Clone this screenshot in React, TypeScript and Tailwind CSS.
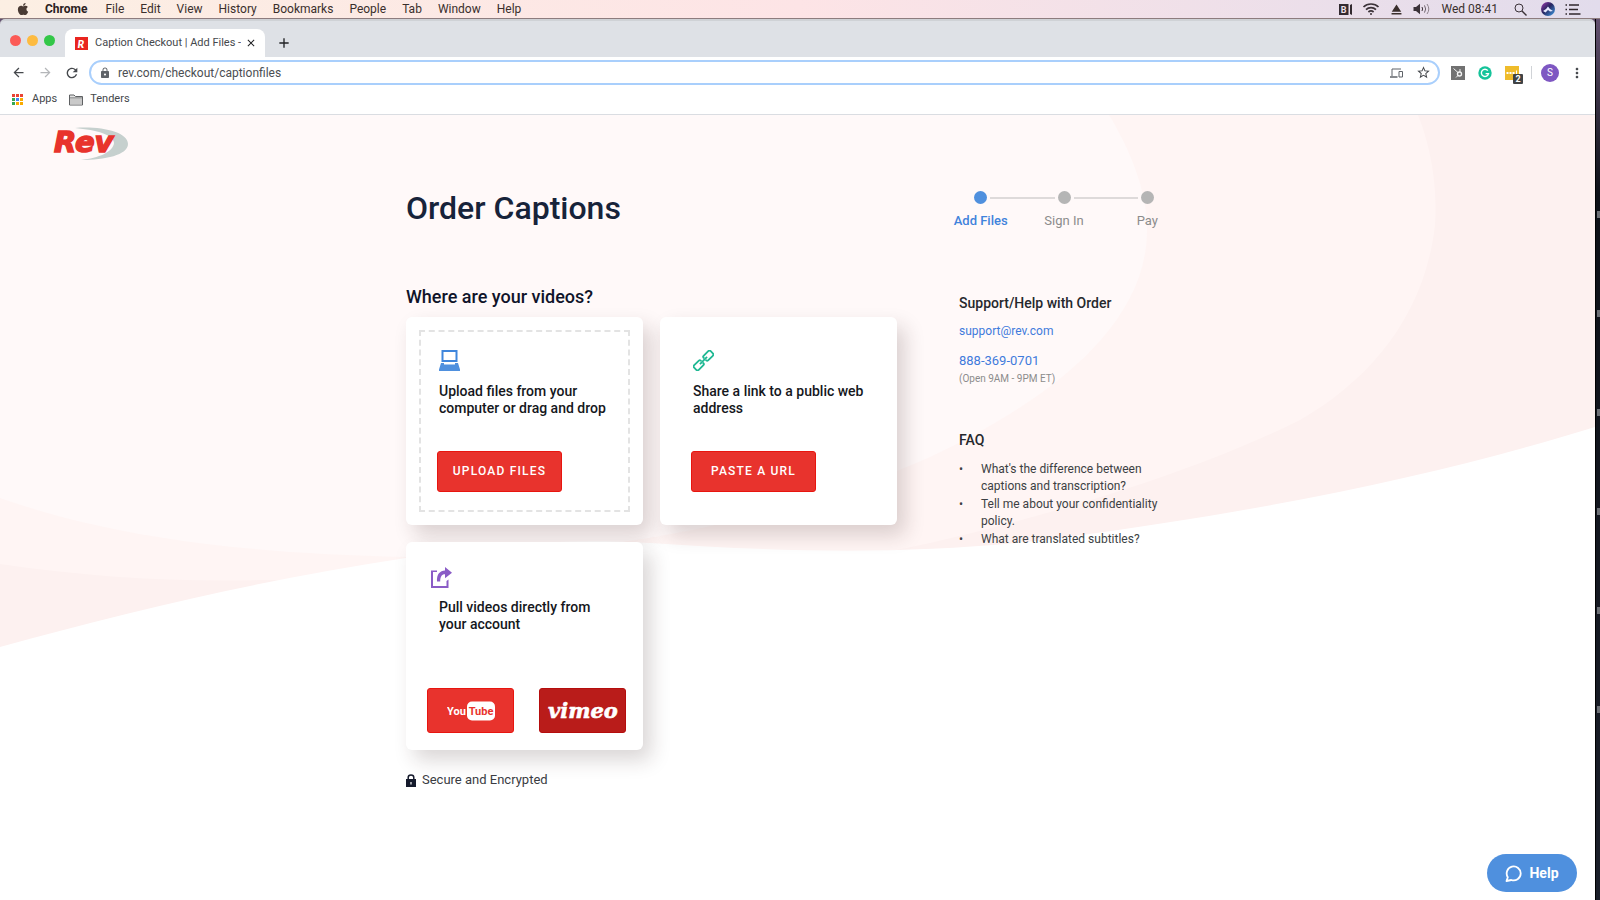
import React from "react";
import clsx from "clsx";
import { FaApple } from "react-icons/fa";
import {
  MdArrowBack,
  MdArrowForward,
  MdRefresh,
  MdLock,
  MdStarBorder,
  MdMoreVert,
  MdEject,
  MdClose,
  MdAdd,
} from "react-icons/md";

const menuItems = ["File", "Edit", "View", "History", "Bookmarks", "People", "Tab", "Window", "Help"];

const steps = [
  { label: "Add Files", active: true },
  { label: "Sign In", active: false },
  { label: "Pay", active: false },
];

const faqs = [
  "What's the difference between captions and transcription?",
  "Tell me about your confidentiality policy.",
  "What are translated subtitles?",
];

const appDots = [
  "#e94335", "#e94335", "#e94335",
  "#34a853", "#4285f4", "#f9ab00",
  "#34a853", "#f9ab00", "#f9ab00",
];

const WifiIcon = () => (
  <svg width="18" height="14" viewBox="0 0 18 14" fill="none" stroke="#3b3238" strokeWidth="1.7">
    <path d="M1.5 5 C5.5 1 12.5 1 16.5 5" />
    <path d="M4 7.6 C6.8 5 11.2 5 14 7.6" />
    <path d="M6.4 10 C8 8.6 10 8.6 11.6 10" />
    <circle cx="9" cy="12" r="1" fill="#3b3238" stroke="none" />
  </svg>
);

const VolumeIcon = () => (
  <svg width="18" height="12" viewBox="0 0 18 12" fill="none" stroke="#3b3238">
    <path d="M0.5 4 H3 L7 0.8 V11.2 L3 8 H0.5 Z" fill="#3b3238" stroke="none" />
    <path d="M9 4 Q10.2 6 9 8" />
    <path d="M11.5 2.4 Q13.8 6 11.5 9.6" stroke="#6d636b" />
    <path d="M14 1 Q17.6 6 14 11" stroke="#8d838b" />
  </svg>
);

const MenuBar = () => (
  <div className="flex h-[18px] items-center bg-linear-to-r from-[#fcefe3] via-[#fde4e6] to-[#e2dcec] pr-[19px] pl-4 text-[12px] leading-[18px] text-[#3a2f2c]">
    <FaApple className="mr-[15px] size-[14px] text-[#4a3b34]" />
    <span className="mr-[18px] font-bold text-[#2b211e]">Chrome</span>
    <nav className="flex gap-4">
      {menuItems.map((item) => (
        <span key={item}>{item}</span>
      ))}
    </nav>
    <div className="ml-auto flex items-center">
      <svg width="13" height="11" viewBox="0 0 13 11" className="mr-2.5">
        <path d="M0 0 H9.5 V11 H0 Z M11 1 L13 0 V11 L11 10 Z" fill="#332a30" />
        <text x="1.8" y="9" fontSize="9" fontWeight="700" fill="#f1e1e8" fontFamily="Roboto">B</text>
      </svg>
      <WifiIcon />
      <MdEject className="mx-2 size-[17px]" />
      <VolumeIcon />
      <span className="mr-4 ml-[11px]">Wed 08:41</span>
      <svg width="13" height="13" viewBox="0 0 13 13" fill="none" stroke="#3b3238">
        <circle cx="5" cy="5" r="4" />
        <path d="M8 8 L12.5 12.5" strokeWidth="1.4" />
      </svg>
      <svg width="14" height="14" viewBox="0 0 14 14" className="mr-2.5 ml-[14px]">
        <defs>
          <linearGradient id="siri" x1="0" y1="0" x2="1" y2="1">
            <stop offset="0" stopColor="#a33bb5" />
            <stop offset="0.45" stopColor="#26245f" />
            <stop offset="1" stopColor="#3f9fe8" />
          </linearGradient>
        </defs>
        <circle cx="7" cy="7" r="7" fill="url(#siri)" />
        <path d="M2 9 Q5 8 7 4.5 Q9 8 12 9 L9 9.5 L7 8 L4.5 10.5 Z" fill="#e6e9ff" />
      </svg>
      <svg width="16" height="11" viewBox="0 0 16 11" stroke="#2f262c" strokeWidth="1.5">
        <path d="M4 1 H14 M4 5.5 H13 M4 10 H15.5" />
        <path d="M0.5 1 H2 M0.5 5.5 H2 M0.5 10 H2" />
      </svg>
    </div>
  </div>
);

const TabStrip = () => (
  <div className="flex h-[38px] items-end rounded-t-[5px] border-t-2 border-[#cfd2d6] bg-[#dee1e6] pl-2.5">
    <div className="mr-2.5 flex gap-[6px] pb-[11px]">
      <span className="size-[11px] rounded-full bg-[#fc5b57]" />
      <span className="size-[11px] rounded-full bg-[#fdbb40]" />
      <span className="size-[11px] rounded-full bg-[#33c748]" />
    </div>
    <div className="flex h-7 w-[200px] items-center rounded-t-lg bg-white pr-2 pl-[10px] text-[11px] text-[#45484c]">
      <svg width="13" height="13" viewBox="0 0 13 13" className="mr-[7px] shrink-0">
        <rect width="13" height="13" fill="#e9251f" />
        <text x="2.4" y="10.5" fontSize="11" fontWeight="900" fontStyle="italic" fill="#fff" fontFamily="Lato">R</text>
      </svg>
      <span className="overflow-hidden whitespace-nowrap">Caption Checkout | Add Files -</span>
      <button aria-label="Close tab" className="ml-auto">
        <MdClose className="size-3 text-[#202124]" />
      </button>
    </div>
    <button aria-label="New tab" className="ml-[11px] pb-[6px]">
      <MdAdd className="size-4 text-[#202124]" />
    </button>
  </div>
);

const Toolbar = () => (
  <div className="flex h-[31px] items-center bg-white pr-[10px] pl-[11px] text-[#45484c]">
    <button aria-label="Back" className="mr-3"><MdArrowBack className="size-[15px]" /></button>
    <button aria-label="Forward" className="mr-[11px]"><MdArrowForward className="size-[15px] text-[#b4b6b9]" /></button>
    <button aria-label="Reload" className="mr-[9px]"><MdRefresh className="size-4" /></button>
    <div className="flex h-[25px] flex-1 items-center rounded-full border-2 border-[#a9cffc] pr-[7px] pl-2">
      <MdLock className="mr-[7px] size-3 text-[#5f6368]" />
      <input
        aria-label="Address"
        defaultValue="rev.com/checkout/captionfiles"
        className="min-w-0 flex-1 text-[12px] text-[#4b4e52] outline-none"
      />
      <svg width="13" height="10" viewBox="0 0 13 10" className="mr-[13px]" fill="none" stroke="#5f6368">
        <path d="M2 8 V1 H11" />
        <path d="M0 9 H7.5" strokeWidth="1.5" />
        <path d="M9 3.5 H12.5 V9 H9 Z" />
      </svg>
      <MdStarBorder className="size-[15px]" />
    </div>
    <svg width="14" height="14" viewBox="0 0 14 14" className="ml-[11px]">
      <rect width="14" height="14" fill="#717171" />
      <g stroke="#f2f2f2" fill="none">
        <circle cx="8.5" cy="8" r="2" strokeWidth="1.4" />
        <path d="M2.5 2.5 L7 6.5 M9 3 V6 M7 9.5 L5 11.5" />
      </g>
    </svg>
    <svg width="14" height="14" viewBox="0 0 14 14" className="ml-[13px]">
      <circle cx="7" cy="7" r="6.7" fill="#15c39a" />
      <path d="M9.8 4.6 A3.6 3.6 0 1 0 10.5 7.6 H7.6" fill="none" stroke="#fff" strokeWidth="1.4" />
    </svg>
    <div className="relative ml-[13px] size-[14px] bg-[#efbc2b]">
      <svg width="14" height="14" viewBox="0 0 14 14" fill="#fff">
        <path d="M1.5 6 H3.5 V8 H1.5 Z M4.5 6 H6.5 V8 H4.5 Z M7.5 6 H9.5 V8 H7.5 Z M11 4.5 H12 V8 H11 Z" />
      </svg>
      <span className="absolute top-2 left-2 size-[10px] rounded-[1px] bg-[#414345] text-center text-[9px] leading-[10px] font-bold text-white">2</span>
    </div>
    <span className="mr-[9px] ml-3 h-[13px] w-px bg-[#d0d3d7]" />
    <span className="size-[18px] rounded-full bg-[#7e57c2] text-center text-[10px] leading-[18px] text-white">S</span>
    <button aria-label="Menu" className="ml-[10px]"><MdMoreVert className="size-4" /></button>
  </div>
);

const BookmarksBar = () => (
  <div className="flex h-[27px] items-center border-b border-[#dadde2] bg-white pb-[3px] pl-3 text-[11px] text-[#45484c]">
    <span className="mr-[9px] grid grid-cols-3 gap-px">
      {appDots.map((color, i) => (
        <span key={i} className="size-[3px]" style={{ background: color }} />
      ))}
    </span>
    <span className="mr-3">Apps</span>
    <svg width="14" height="12" viewBox="0 0 14 12" className="mr-[7px]">
      <path d="M0.5 11 V1 H5 L6.5 2.5 H13.5 V11 Z" fill="#e3e3e3" stroke="#5f6163" />
      <path d="M0.5 4 H13.5" stroke="#5f6163" />
      <path d="M1 4.5 H13 V10.5 H1 Z" fill="#c9c9c9" />
    </svg>
    <span>Tenders</span>
  </div>
);

const Backdrop = () => (
  <svg className="absolute inset-0 size-full" viewBox="0 0 1595 785" preserveAspectRatio="none">
    <rect width="1595" height="785" fill="#fdf1f0" />
    <path
      d="M0 0 H1418 C1434 40 1437 80 1435 110 C1425 200 1370 265 1300 305 C1200 355 1063 397 930 428 C700 480 400 470 265 465 C170 467 90 462 0 449 Z"
      fill="#fff5f4"
    />
    <path
      d="M0 0 H1109 C1130 35 1147 75 1147 115 C1147 215 1040 290 930 342 C800 400 600 445 406 442 C250 438 120 425 0 383 Z"
      fill="#fff9f9"
    />
    <path
      d="M0 532 C130 496 270 463 406 443 C500 428 570 423 650 428 C780 437 920 441 1060 423 C1280 394 1450 357 1595 312 V785 H0 Z"
      fill="#fff"
    />
  </svg>
);

const RevLogo = () => (
  <svg width="76" height="34" viewBox="0 0 76 34" role="img" aria-label="Rev" className="overflow-visible">
    <path d="M22 1 C48 -1 75 5 75 17 C75 28 52 33 28 33 C46 31 60 25 61 16 C61 8 44 3 22 1 Z" fill="#c6d0ce" />
    <text
      x="1"
      y="25"
      fontFamily="'DejaVu Sans', sans-serif"
      fontWeight="700"
      fontStyle="italic"
      fontSize="29"
      fill="#e8332c"
      stroke="#e8332c"
      strokeWidth="1.5"
    >
      Rev
    </text>
  </svg>
);

const LaptopIcon = () => (
  <svg width="21" height="21" viewBox="0 0 21 21" className="ml-0.5">
    <path d="M2.5 0 H18.5 V12 H2.5 Z M4.5 2 V10 H16.5 V2 Z" fill="#3f86dc" fillRule="evenodd" />
    <path d="M2 13 H5 V14.5 H16 V13 H19 L21 19.5 V21 H0 V19.5 Z" fill="#4f90de" />
  </svg>
);

const LinkIcon = () => (
  <svg width="21" height="21" viewBox="0 0 21 21" className="ml-0.5" fill="none" stroke="#1fb893" strokeWidth="1.8">
    <g transform="rotate(-45 10.5 10.5)">
      <path d="M8.5 9.5 V8.6 Q8.5 7.3 7.2 7.3 H0.6 Q-1.2 7.3 -1.2 9 V12 Q-1.2 13.7 0.6 13.7 H7.2 Q8.5 13.7 8.5 12.4 V11.5" />
      <path d="M12.5 9.5 V8.6 Q12.5 7.3 13.8 7.3 H20.4 Q22.2 7.3 22.2 9 V12 Q22.2 13.7 20.4 13.7 H13.8 Q12.5 13.7 12.5 12.4 V11.5" />
      <path d="M5.5 10.5 H15.5" />
    </g>
  </svg>
);

const ShareIcon = () => (
  <svg width="21" height="21" viewBox="0 0 21 21" className="ml-1" fill="#8a5cc6">
    <path d="M0 3.5 H6 V5 H2 V19 H15.5 V14 L17.5 12.5 V21 H0 Z" />
    <path d="M6 14.5 C5.5 7 9 3.8 14 3.5 V0 L21 5.8 L14 11.2 V7.3 C10.5 7.3 9.3 10 9.2 14.5 Z" />
  </svg>
);

const RedButton = ({ children }: { children: React.ReactNode }) => (
  <button className="mt-[34px] h-[41px] w-[125px] rounded-[3px] border border-[#e8150f] bg-[#e8332d] text-[12px] font-medium tracking-widest text-white">
    {children}
  </button>
);

const cardClass = "min-h-[208px] rounded-md bg-white shadow-[8px_10px_20px_rgba(50,30,30,0.18)]";

const Stepper = () => (
  <ol className="grid grid-cols-3">
    {steps.map((step, i) => (
      <li key={step.label} className="flex flex-col items-center gap-[7px]">
        <div className="flex w-full items-center gap-[3px]">
          <span className={clsx("h-[2px] flex-1", i > 0 && "bg-[#dedada]")} />
          <span className={clsx("size-[13px] rounded-full", step.active ? "bg-[#4f90de]" : "bg-[#b5b5b5]")} />
          <span className={clsx("h-[2px] flex-1", i < steps.length - 1 && "bg-[#dedada]")} />
        </div>
        <span
          className={clsx(
            "text-[13px] leading-5",
            step.active ? "font-medium text-[#3f83dc]" : "text-[#8c8c8c]"
          )}
        >
          {step.label}
        </span>
      </li>
    ))}
  </ol>
);

const Sidebar = () => (
  <aside className="w-[250px]">
    <Stepper />
    <div className="pr-6 pl-5">
      <h3 className="mt-[62px] text-[14px] leading-5 font-medium text-[#25282d]">Support/Help with Order</h3>
      <a href="#email" className="mt-2 block text-[12px] leading-5 text-[#3f7bdc]">support@rev.com</a>
      <a href="#phone" className="mt-2.5 block text-[13px] leading-5 text-[#3f7bdc]">888-369-0701</a>
      <p className="text-[10px] leading-4 text-[#8c8c8c]">(Open 9AM - 9PM ET)</p>
      <h3 className="mt-[43px] text-[14px] leading-5 font-medium text-[#25282d]">FAQ</h3>
      <ul className="mt-[11px] space-y-px text-[12px] leading-[17px] text-[#3c3f43]">
        {faqs.map((faq) => (
          <li key={faq} className="flex">
            <span className="w-[22px] shrink-0">•</span>
            <span>{faq}</span>
          </li>
        ))}
      </ul>
    </div>
  </aside>
);

const OrderPage = () => (
  <div className="relative flex-1">
    <Backdrop />
    <div className="relative">
      <header className="h-12 pt-3 pl-[53px]">
        <RevLogo />
      </header>
      <main className="mx-auto flex max-w-[783px] justify-between pt-7">
        <div className="w-[491px]">
          <h1 className="text-[32px] leading-[34px] font-medium text-[#17233a]">Order Captions</h1>
          <h2 className="mt-[60px] text-[18px] leading-6 font-medium text-[#10142a]">Where are your videos?</h2>
          <div className="mt-2 grid grid-cols-2 gap-[17px] text-[14px] leading-[17px] font-medium text-[#15171c]">
            <section className={clsx(cardClass, "p-[13px]")}>
              <div className="border-2 border-dashed border-[#e3e3e3] px-4 py-[18px]">
                <LaptopIcon />
                <p className="mt-3 pl-0.5 whitespace-nowrap">
                  Upload files from your
                  <br />
                  computer or drag and drop
                </p>
                <RedButton>UPLOAD FILES</RedButton>
              </div>
            </section>
            <section className={clsx(cardClass, "px-[31px] py-[33px]")}>
              <LinkIcon />
              <p className="mt-3 pl-0.5 whitespace-nowrap">
                Share a link to a public web
                <br />
                address
              </p>
              <RedButton>PASTE A URL</RedButton>
            </section>
            <section className={clsx(cardClass, "pt-[25px] pl-[21px]")}>
              <ShareIcon />
              <p className="mt-[11px] pl-3">
                Pull videos directly from
                <br />
                your account
              </p>
              <div className="mt-[55px] flex gap-[25px]">
                <button
                  aria-label="YouTube"
                  className="flex h-[45px] w-[87px] items-center justify-center rounded-[3px] border border-[#e8150f] bg-[#e8332d]"
                >
                  <svg width="48" height="20" viewBox="0 0 48 20" fontFamily="Roboto, sans-serif" fontSize="11" fontWeight="700">
                    <text x="0" y="14" fill="#fff">You</text>
                    <rect x="20" y="0.5" width="28" height="19" rx="5" fill="#fff" />
                    <text x="34" y="14" textAnchor="middle" fill="#e8332d">Tube</text>
                  </svg>
                </button>
                <button
                  aria-label="Vimeo"
                  className="flex h-[45px] w-[87px] items-center justify-center rounded-[3px] border border-[#b50d0d] bg-[#b91c1a]"
                >
                  <svg width="80" height="28" viewBox="0 0 80 28">
                    <text x="40" y="21" textAnchor="middle" fontFamily="'DejaVu Serif', serif" fontSize="21" fontWeight="700" fontStyle="italic" fill="#fff" stroke="#fff" strokeWidth="0.6">vimeo</text>
                  </svg>
                </button>
              </div>
            </section>
          </div>
          <p className="mt-5 flex items-center gap-[6px] text-[13px] leading-5 text-[#3a3c42]">
            <svg width="10" height="13" viewBox="0 0 10 13">
              <path d="M0 5 H10 V13 H0 Z" fill="#151a2c" />
              <path d="M2.2 5.5 V3.5 Q2.2 1 5 1 Q7.8 1 7.8 3.5 V5.5" fill="none" stroke="#151a2c" strokeWidth="1.5" />
              <path d="M4.4 8 H5.6 V10.5 H4.4 Z" fill="#fff" />
            </svg>
            Secure and Encrypted
          </p>
        </div>
        <Sidebar />
      </main>
    </div>
    <button className="absolute right-[18px] bottom-2 flex h-[38px] w-[90px] items-center justify-center gap-[7px] rounded-full bg-[#4f90de] text-[14px] font-bold text-white">
      <svg width="17" height="17" viewBox="0 0 17 17" fill="none" stroke="#fff" strokeWidth="1.8">
        <path d="M2.8 12.2 A7 7 0 1 1 6.3 15 L1.5 16 Z" strokeLinejoin="round" />
      </svg>
      Help
    </button>
  </div>
);

const DesktopEdge = () => (
  <div className="flex w-[5px] shrink-0 flex-col items-end gap-[92px] border-l border-black bg-linear-to-b from-[#62506e] from-0% via-[#0d1017] via-20% to-[#1b1f2a] pt-[192px]">
    {[0, 1, 2, 3, 4, 5].map((i) => (
      <span key={i} className="h-[7px] w-[3px] shrink-0 bg-[#6d7076]" />
    ))}
  </div>
);

const App: React.FC = () => {
  return (
    <div className="flex min-h-screen flex-col font-['Roboto','Liberation_Sans',sans-serif]">
      <MenuBar />
      <div className="flex flex-1 border-t border-[#8d7c7e] bg-[#62506e]">
        <div className="flex flex-1 flex-col">
          <TabStrip />
          <Toolbar />
          <BookmarksBar />
          <OrderPage />
        </div>
        <DesktopEdge />
      </div>
    </div>
  );
};

export default App;
